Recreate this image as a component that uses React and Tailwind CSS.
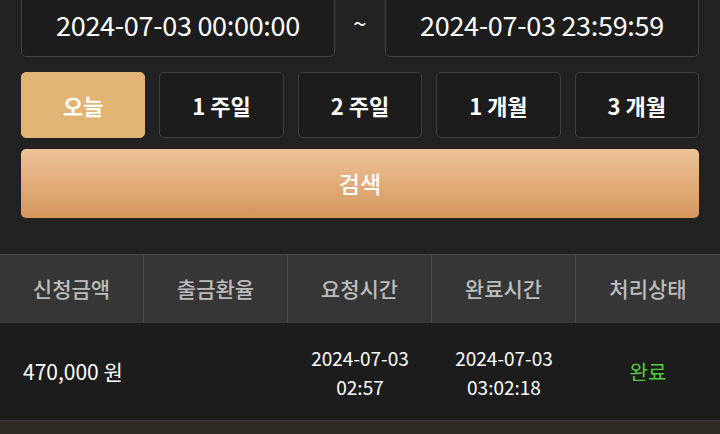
const PERIODS = ["오늘", "1 주일", "2 주일", "1 개월", "3 개월"];
const COLUMNS = ["신청금액", "출금환율", "요청시간", "완료시간", "처리상태"];

export default function App() {
  const font = { fontFamily: "'Noto Sans CJK KR', 'Noto Sans', sans-serif" };

  return (
    <div className="h-[434px] w-[720px] overflow-hidden bg-[#212121] text-white" style={font}>
      {/* Date range */}
      <div className="-mt-[7px] flex items-center px-[21px]">
        <div className="flex h-[64px] flex-1 items-center justify-center rounded-[5px] border border-[#444] bg-[#1c1c1c] pt-[1px] text-[27px] tracking-[-0.3px]">
          2024-07-03 00:00:00
        </div>
        <div className="w-[50px] pb-[4px] text-center text-[24px]">~</div>
        <div className="flex h-[64px] flex-1 items-center justify-center rounded-[5px] border border-[#444] bg-[#1c1c1c] pt-[1px] text-[27px] tracking-[-0.3px]">
          2024-07-03 23:59:59
        </div>
      </div>

      {/* Period buttons */}
      <div className="mt-[15px] grid grid-cols-5 gap-[14px] px-[21px]">
        {PERIODS.map((p, i) => (
          <button
            key={p}
            className={`h-[66px] rounded-[5px] border text-[22px] font-bold ${
              i === 0
                ? "border-[#e3b478] bg-[#e2b473] text-white"
                : "border-[#3e3e3e] bg-[#1c1c1c] text-white"
            }`}
          >
            {p}
          </button>
        ))}
      </div>

      {/* Search */}
      <div className="mt-[11px] px-[21px]">
        <button className="h-[69px] w-full rounded-[5px] bg-gradient-to-b from-[#efc398] to-[#d4975c] text-[23px] font-medium text-white">
          검색
        </button>
      </div>

      {/* Table */}
      <div className="mt-[36px]">
        <div className="grid grid-cols-5 border-t border-[#4a4a4a] bg-[#363636]">
          {COLUMNS.map((c, i) => (
            <div
              key={c}
              className={`flex h-[68px] items-center justify-center text-[21px] font-medium text-[#bcbcbc] ${
                i < 4 ? "border-r border-[#4a4a4a]" : ""
              }`}
            >
              {c}
            </div>
          ))}
        </div>
        <div className="grid h-[98px] grid-cols-5 border-b border-[#3c3c3c] bg-[#1c1c1c] text-[19px]">
          <div className="flex items-center pl-[23px] text-[21px]">470,000 원</div>
          <div />
          <div className="flex flex-col items-center justify-center leading-[29px]">
            <span>2024-07-03</span>
            <span>02:57</span>
          </div>
          <div className="flex flex-col items-center justify-center leading-[29px]">
            <span>2024-07-03</span>
            <span>03:02:18</span>
          </div>
          <div className="flex items-center justify-center text-[20px] text-[#56cc3c]">완료</div>
        </div>
        <div className="h-[20px] bg-[#2e2a24]" />
      </div>
    </div>
  );
}
